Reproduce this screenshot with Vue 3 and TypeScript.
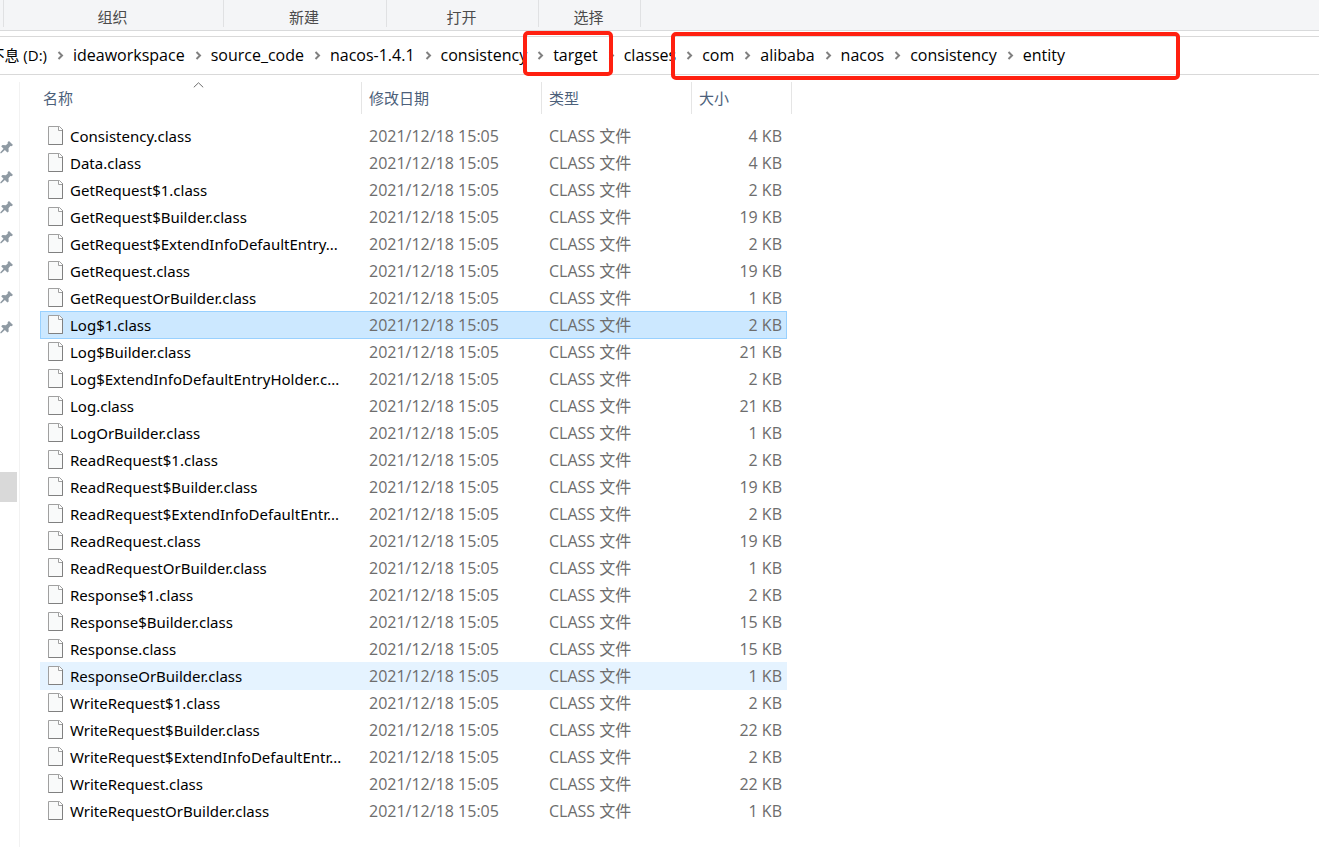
<script setup lang="ts">
interface FileRow {
  name: string
  size: number
  state?: 'selected' | 'hovered'
}

interface RibbonGroup {
  label: string
  kind: string
}

const ribbon: RibbonGroup[] = [
  { label: '组织', kind: 'organize' },
  { label: '新建', kind: 'create' },
  { label: '打开', kind: 'open' },
  { label: '选择', kind: 'select' },
]

const crumbs: string[] = [
  'ideaworkspace',
  'source_code',
  'nacos-1.4.1',
  'consistency',
  'target',
  'classes',
  'com',
  'alibaba',
  'nacos',
  'consistency',
  'entity',
]

const modified = '2021/12/18 15:05'

const files: FileRow[] = [
  { name: 'Consistency.class', size: 4 },
  { name: 'Data.class', size: 4 },
  { name: 'GetRequest$1.class', size: 2 },
  { name: 'GetRequest$Builder.class', size: 19 },
  { name: 'GetRequest$ExtendInfoDefaultEntry...', size: 2 },
  { name: 'GetRequest.class', size: 19 },
  { name: 'GetRequestOrBuilder.class', size: 1 },
  { name: 'Log$1.class', size: 2, state: 'selected' },
  { name: 'Log$Builder.class', size: 21 },
  { name: 'Log$ExtendInfoDefaultEntryHolder.c...', size: 2 },
  { name: 'Log.class', size: 21 },
  { name: 'LogOrBuilder.class', size: 1 },
  { name: 'ReadRequest$1.class', size: 2 },
  { name: 'ReadRequest$Builder.class', size: 19 },
  { name: 'ReadRequest$ExtendInfoDefaultEntr...', size: 2 },
  { name: 'ReadRequest.class', size: 19 },
  { name: 'ReadRequestOrBuilder.class', size: 1 },
  { name: 'Response$1.class', size: 2 },
  { name: 'Response$Builder.class', size: 15 },
  { name: 'Response.class', size: 15 },
  { name: 'ResponseOrBuilder.class', size: 1, state: 'hovered' },
  { name: 'WriteRequest$1.class', size: 2 },
  { name: 'WriteRequest$Builder.class', size: 22 },
  { name: 'WriteRequest$ExtendInfoDefaultEntr...', size: 2 },
  { name: 'WriteRequest.class', size: 22 },
  { name: 'WriteRequestOrBuilder.class', size: 1 },
]
</script>

<template>
  <div class="explorer">
    <header class="ribbon">
      <div v-for="group in ribbon" :key="group.kind" class="group" :class="group.kind">{{ group.label }}</div>
    </header>

    <nav class="address" aria-label="路径">
      <a class="crumb drive" href="#"><span>不息 (D:)</span></a>
      <template v-for="(crumb, i) in crumbs" :key="i">
        <svg class="chevron" viewBox="0 0 26 12" aria-hidden="true">
          <path d="M11.500 2 15 5.500 11.500 9" />
        </svg>
        <a class="crumb" href="#">{{ crumb }}</a>
      </template>
      <span class="mark mark-target"></span>
      <span class="mark mark-package"></span>
    </nav>

    <div class="content">
      <aside class="sidebar">
        <svg v-for="n in 7" :key="n" class="pin" viewBox="0 0 13 30" aria-hidden="true">
          <path d="M9 9 13 13l-1.600 1.300-1-.2-1.900 2.100.2 3.200-1.300 1.200-2.500-2.500L1.300 21.200.3 21.200.4 20.300 3.500 16.700 1.200 14.300l1.300-1.200 3.300.1 2-1.800-.2-1.200z" />
        </svg>
        <div class="place"></div>
      </aside>

      <main class="listing">
        <table>
          <colgroup>
            <col class="c-name" />
            <col class="c-date" />
            <col class="c-type" />
            <col class="c-size" />
            <col class="c-edge" />
          </colgroup>
          <thead>
            <tr>
              <th class="name" aria-sort="ascending">
                <button type="button">名称</button>
                <svg class="sort" viewBox="0 0 11 6" aria-hidden="true"><path d="M.8 5.300 5.500.8l4.700 4.500" /></svg>
              </th>
              <th><button type="button">修改日期</button></th>
              <th><button type="button">类型</button></th>
              <th colspan="2"><button type="button">大小</button></th>
            </tr>
          </thead>
          <tbody>
            <tr v-for="file in files" :key="file.name" :class="file.state">
              <td class="name">
                <div class="file">
                  <svg class="doc" viewBox="0 0 15 19" aria-hidden="true">
                    <path class="sheet" d="M.5.5h11l3 3v15H.5z" />
                    <path class="fold" d="M10.500.5v4h4" />
                    <path class="edge" d="M14.500 3.500v15H.5" />
                  </svg>
                  <span>{{ file.name }}</span>
                </div>
              </td>
              <td>{{ modified }}</td>
              <td>CLASS 文件</td>
              <td class="size">{{ file.size }} KB</td>
            </tr>
          </tbody>
        </table>
      </main>
    </div>
  </div>
</template>

<style>
body {
  margin: 0;
  background: #fff;
}
</style>

<style scoped>
.explorer {
  display: flex;
  flex-direction: column;
  min-height: 100vh;
  overflow: hidden;
  box-sizing: border-box;
  font-family: "Open Sans", "Noto Sans CJK SC", sans-serif;
  font-size: 15px;
  line-height: 20px;
  color: #000;
}

.ribbon {
  display: flex;
  height: 27px;
  padding: 0 0 3px 3px;
  background: #f4f5f7;
  border-bottom: 1px solid #d9dadb;
}

.group {
  box-sizing: border-box;
  padding: 7px 2px 0 0;
  border-right: 1px solid #e0e1e3;
  text-align: center;
  color: #4b4b4b;
}

.organize {
  width: 221px;
  border-left: 1px solid #e0e1e3;
}

.create {
  width: 163px;
}

.open {
  width: 152px;
}

.select {
  width: 102px;
}

.address {
  position: relative;
  display: flex;
  align-items: center;
  height: 37px;
  margin-top: 5px;
  border-top: 1px solid #d9d9d9;
  border-bottom: 1px solid #d9d9d9;
  font-size: 16px;
  white-space: nowrap;
}

.crumb {
  padding-bottom: 2px;
  color: #000;
  text-decoration: none;
}

.drive {
  display: flex;
  justify-content: flex-end;
  width: 47px;
  font-size: 15px;
}

.chevron {
  flex: none;
  width: 26px;
  height: 12px;
  fill: none;
  stroke: #808080;
  stroke-width: 2;
}

.mark {
  position: absolute;
  box-sizing: border-box;
  border: 4px solid #ff2010;
  border-radius: 5px;
}

.mark-target {
  left: 523px;
  top: -6px;
  width: 90px;
  height: 45px;
}

.mark-package {
  left: 671px;
  top: -5px;
  width: 509px;
  height: 48px;
}

.content {
  display: flex;
  flex: 1;
  margin-top: 7px;
}

.sidebar {
  width: 19px;
  padding-top: 50px;
  border-right: 1px solid #f2f2f2;
}

.pin {
  display: block;
  width: 13px;
  height: 30px;
  fill: #8f9aa3;
}

.place {
  width: 17px;
  height: 30px;
  margin-top: 130px;
  background: #d9d9d9;
}

.listing {
  padding-left: 20px;
}

table {
  table-layout: fixed;
  width: 752px;
  border-spacing: 0;
}

.c-name {
  width: 322px;
}

.c-date {
  width: 180px;
}

.c-type {
  width: 150px;
}

.c-size {
  width: 95px;
}

.c-edge {
  width: 5px;
}

thead tr {
  height: 40px;
}

th {
  position: relative;
  padding: 0 0 9px 7px;
  text-align: left;
  font-weight: 400;
}

th::after {
  content: "";
  position: absolute;
  top: 0;
  right: 0;
  width: 1px;
  height: 32px;
  background: #e5e5e5;
}

th.name {
  padding-left: 3px;
}

th button {
  padding: 0;
  border: 0;
  background: none;
  font: inherit;
  color: #4c607a;
}

.sort {
  position: absolute;
  left: 153px;
  top: 0;
  width: 11px;
  height: 6px;
  fill: none;
  stroke: #6d6d6d;
}

tbody tr {
  position: relative;
  height: 27px;
}

td {
  padding: 0 0 0 7px;
  font-size: 16px;
  color: #6d6d6d;
  white-space: nowrap;
}

td.name {
  padding-left: 8px;
  font-family: "Noto Sans", "Noto Sans CJK SC", sans-serif;
  font-size: 15px;
  color: #000;
}

td.size {
  padding-right: 5px;
  text-align: right;
}

.file {
  display: flex;
  align-items: center;
  gap: 7px;
}

.doc {
  flex: none;
  width: 15px;
  height: 19px;
}

.sheet {
  fill: #f9fafa;
  stroke: #a0a0a0;
}

.fold {
  fill: #fff;
  stroke: #a0a0a0;
}

.edge {
  fill: none;
  stroke: #808080;
}

.selected td {
  background: #cce8ff;
}

.hovered td {
  background: #e5f3ff;
}

.selected::after,
.hovered::after {
  content: "";
  position: absolute;
  inset: 0 0 -1px 0;
  width: 745px;
  border: 1px solid #99d1ff;
}

.hovered::after {
  border-color: #e5f3ff;
}
</style>
